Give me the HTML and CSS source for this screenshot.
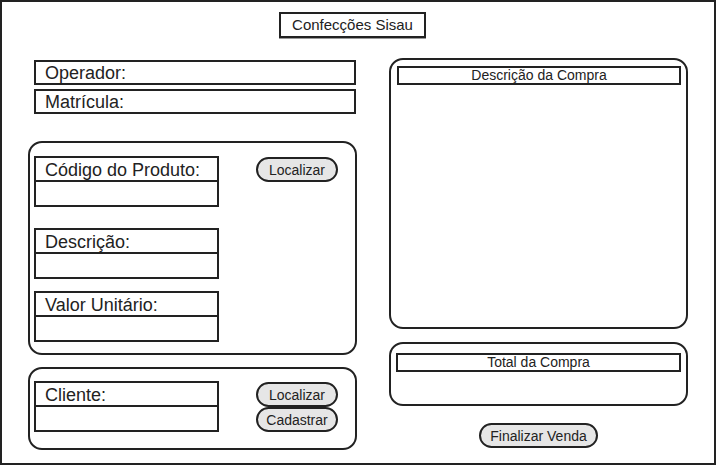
FILE: index.html
```html
<!DOCTYPE html>
<html lang="pt-BR">
<head>
    <meta charset="UTF-8">
    <meta name="viewport" content="width=device-width, initial-scale=1.0">
    <title>Confecções Sisau</title>
    <link rel="stylesheet" href="styles.css">
</head>
<body>
    <div class="frame">
        <header>
            <div class="title">Confecções Sisau</div>
        </header>

        <div class="columns">
            <!-- Coluna esquerda -->
            <div class="left">
                <div class="info">
                    <div class="info-box">Operador:</div>
                    <div class="info-box">Matrícula:</div>
                </div>

                <!-- Produto -->
                <div class="panel product-panel">
                    <div class="fields">
                        <div class="field first">
                            <div class="field-label">Código do Produto:</div>
                            <div class="field-input"></div>
                        </div>
                        <div class="field second">
                            <div class="field-label">Descrição:</div>
                            <div class="field-input"></div>
                        </div>
                        <div class="field">
                            <div class="field-label">Valor Unitário:</div>
                            <div class="field-input"></div>
                        </div>
                    </div>
                    <div class="actions">
                        <button class="pill">Localizar</button>
                    </div>
                </div>

                <!-- Cliente -->
                <div class="panel client-panel">
                    <div class="fields">
                        <div class="field">
                            <div class="field-label">Cliente:</div>
                            <div class="field-input"></div>
                        </div>
                    </div>
                    <div class="actions">
                        <button class="pill">Localizar</button>
                        <button class="pill">Cadastrar</button>
                    </div>
                </div>
            </div>

            <!-- Coluna direita -->
            <div class="right">
                <div class="panel purchase-panel">
                    <div class="panel-head">Descrição da Compra</div>
                </div>
                <div class="panel total-panel">
                    <div class="panel-head">Total da Compra</div>
                </div>
                <button class="pill finish">Finalizar Venda</button>
            </div>
        </div>
    </div>
</body>
</html>
```

FILE: styles.css
```css
* {
    box-sizing: border-box;
}

body {
    margin: 0;
    background-color: #fff;
    font-family: 'Liberation Sans', Arial, sans-serif;
    color: #222;
}

.frame {
    width: 716px;
    height: 465px;
    border: 2px solid #222;
    padding-top: 10px;
}

header {
    display: flex;
    padding-left: 277px;
}

.title {
    width: 147px;
    height: 26px;
    border: 2px solid #222;
    font-size: 15px;
    line-height: 22px;
    text-align: center;
    box-shadow: 0 1px 0 #999;
}

.columns {
    display: flex;
    gap: 32px;
    margin-top: 20px;
    padding-left: 26px;
}

.left {
    width: 329px;
}

.right {
    width: 299px;
    display: flex;
    flex-direction: column;
}

.info {
    display: flex;
    flex-direction: column;
    gap: 4px;
    padding: 2px 0 0 6px;
}

.info-box {
    width: 322px;
    height: 25px;
    border: 2px solid #222;
    padding-left: 9px;
    font-size: 18px;
    line-height: 23px;
}

.panel {
    border: 2px solid #222;
    border-radius: 14px;
}

.product-panel {
    display: flex;
    height: 214px;
    margin-top: 27px;
    padding: 13px 4px 0 4px;
}

.client-panel {
    display: flex;
    height: 83px;
    margin-top: 12px;
    padding: 12px 4px 0 4px;
}

.fields {
    width: 185px;
}

.field.first {
    margin-bottom: 21px;
}

.field.second {
    margin-bottom: 12px;
}

.field-label {
    height: 26px;
    border: 2px solid #222;
    padding-left: 9px;
    font-size: 18px;
    line-height: 24px;
}

.field-input {
    height: 25px;
    border: 2px solid #222;
    border-top: none;
}

.actions {
    display: flex;
    flex-direction: column;
    margin-left: 37px;
    padding-top: 1px;
}

.pill {
    width: 82px;
    height: 25px;
    padding: 0;
    border: 2px solid #222;
    border-radius: 13px;
    background-color: #e6e6e6;
    font-family: 'Liberation Sans', Arial, sans-serif;
    font-size: 14px;
    line-height: 20px;
    color: #222;
    text-align: center;
}

.purchase-panel {
    height: 271px;
    padding: 6px 5px 0 6px;
}

.total-panel {
    height: 64px;
    margin-top: 13px;
    padding: 9px 5px 0 5px;
}

.panel-head {
    height: 19px;
    border: 2px solid #222;
    font-size: 14px;
    line-height: 15px;
    text-align: center;
}

.finish {
    width: 119px;
    margin: 17px auto 0;
}
```
